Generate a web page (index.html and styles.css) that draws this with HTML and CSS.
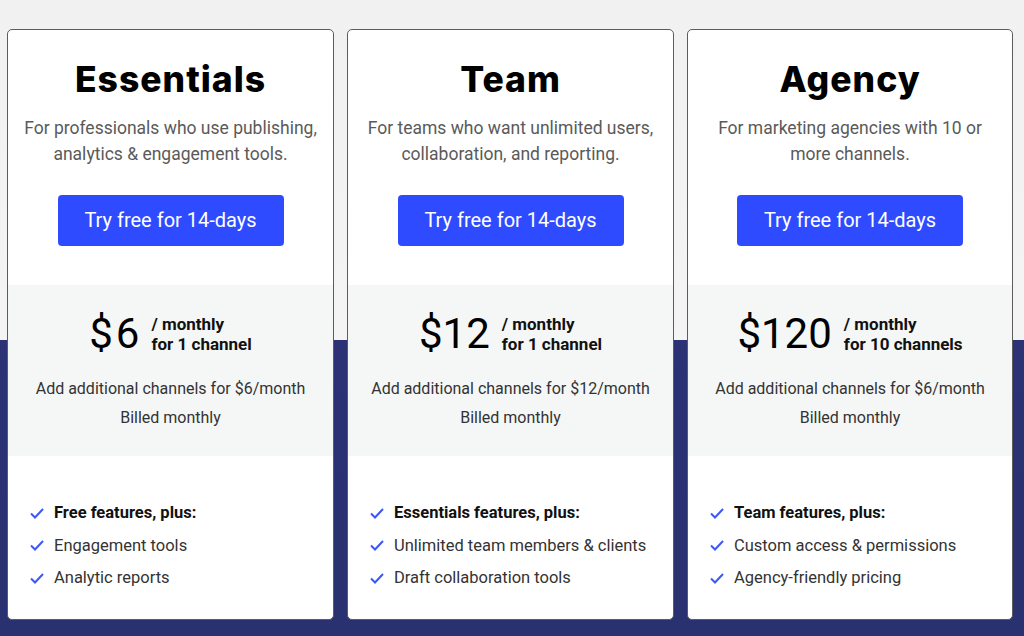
FILE: index.html
```html
<!DOCTYPE html>
<html lang="en">
<head>
<meta charset="utf-8">
<title>Pricing</title>
<link rel="stylesheet" href="styles.css">
</head>
<body>
<div class="page">
  <div class="plans">
    <div class="card">
      <div class="head">
        <h2 class="title">Essentials</h2>
        <p class="desc">For professionals who use publishing, analytics &amp; engagement tools.</p>
        <a class="btn">Try free for 14-days</a>
      </div>
      <div class="price">
        <div class="price-row">
          <span class="amount spaced">$6</span>
          <span class="per">/ monthly<br>for 1 channel</span>
        </div>
        <p class="note">Add additional channels for $6/month</p>
        <p class="note">Billed monthly</p>
      </div>
      <ul class="features">
        <li class="strong"><svg class="chk" viewBox="0 0 14 11"><path d="M1 5.5 L5 9.5 L13 1"/></svg>Free features, plus:</li>
        <li><svg class="chk" viewBox="0 0 14 11"><path d="M1 5.5 L5 9.5 L13 1"/></svg>Engagement tools</li>
        <li><svg class="chk" viewBox="0 0 14 11"><path d="M1 5.5 L5 9.5 L13 1"/></svg>Analytic reports</li>
      </ul>
    </div>
    <div class="card">
      <div class="head">
        <h2 class="title">Team</h2>
        <p class="desc">For teams who want unlimited users, collaboration, and reporting.</p>
        <a class="btn">Try free for 14-days</a>
      </div>
      <div class="price">
        <div class="price-row">
          <span class="amount">$12</span>
          <span class="per">/ monthly<br>for 1 channel</span>
        </div>
        <p class="note">Add additional channels for $12/month</p>
        <p class="note">Billed monthly</p>
      </div>
      <ul class="features">
        <li class="strong"><svg class="chk" viewBox="0 0 14 11"><path d="M1 5.5 L5 9.5 L13 1"/></svg>Essentials features, plus:</li>
        <li><svg class="chk" viewBox="0 0 14 11"><path d="M1 5.5 L5 9.5 L13 1"/></svg>Unlimited team members &amp; clients</li>
        <li><svg class="chk" viewBox="0 0 14 11"><path d="M1 5.5 L5 9.5 L13 1"/></svg>Draft collaboration tools</li>
      </ul>
    </div>
    <div class="card">
      <div class="head">
        <h2 class="title">Agency</h2>
        <p class="desc">For marketing agencies with 10 or more channels.</p>
        <a class="btn">Try free for 14-days</a>
      </div>
      <div class="price">
        <div class="price-row">
          <span class="amount">$120</span>
          <span class="per">/ monthly<br>for 10 channels</span>
        </div>
        <p class="note">Add additional channels for $6/month</p>
        <p class="note">Billed monthly</p>
      </div>
      <ul class="features">
        <li class="strong"><svg class="chk" viewBox="0 0 14 11"><path d="M1 5.5 L5 9.5 L13 1"/></svg>Team features, plus:</li>
        <li><svg class="chk" viewBox="0 0 14 11"><path d="M1 5.5 L5 9.5 L13 1"/></svg>Custom access &amp; permissions</li>
        <li><svg class="chk" viewBox="0 0 14 11"><path d="M1 5.5 L5 9.5 L13 1"/></svg>Agency-friendly pricing</li>
      </ul>
    </div>
  </div>
</div>
</body>
</html>
```

FILE: styles.css
```css
* { box-sizing: border-box; }
html, body { margin: 0; padding: 0; }
body {
  width: 1024px;
  height: 636px;
  overflow: hidden;
  font-family: Roboto, "Liberation Sans", sans-serif;
}
.page {
  height: 636px;
  background:
    linear-gradient(to bottom, #f1f1f1 0, #f4f4f4 340px, #2b3275 340px, #2a3170 636px);
  padding: 29px 0 0 7px;
}
.plans {
  display: grid;
  grid-template-columns: 327px 327px 326px;
  column-gap: 13px;
}
.card {
  height: 591px;
  background: #fff;
  border: 1px solid #5c5c5c;
  border-radius: 5px;
  overflow: hidden;
  display: flex;
  flex-direction: column;
}
.head {
  display: flex;
  flex-direction: column;
  align-items: center;
  text-align: center;
  padding: 28px 15px 39px;
}
.title {
  margin: 0;
  font-family: Inter, "DejaVu Sans", sans-serif;
  font-weight: 800;
  font-size: 35.5px;
  line-height: 44px;
  color: #000;
  letter-spacing: 1px;
}
.desc {
  margin: 13px 0 0;
  font-size: 17.5px;
  line-height: 26px;
  color: #5a5a5a;
}
.btn {
  margin-top: 28px;
  width: 226px;
  height: 51px;
  border-radius: 4px;
  background: #2f4bff;
  color: #fff;
  font-size: 20px;
  line-height: 51px;
  text-align: center;
}
.price {
  background: #f5f7f7;
  height: 171px;
  padding-top: 25px;
  text-align: center;
}
.price-row {
  display: flex;
  justify-content: center;
  align-items: center;
  gap: 12px;
}
.amount {
  font-size: 42px;
  line-height: 48px;
  color: #000;
  font-weight: 400;
}
.amount.spaced { letter-spacing: 3px; margin-right: -3px; }
.per {
  text-align: left;
  font-size: 17px;
  font-weight: 700;
  line-height: 20px;
  color: #111;
}
.note {
  margin: 0;
  font-size: 16px;
  line-height: 29px;
  color: #333;
}
.price-row + .note { margin-top: 16px; }
.features {
  list-style: none;
  margin: 41px 0 0;
  padding: 0 0 0 22px;
}
.features li {
  display: flex;
  align-items: center;
  font-size: 16.5px;
  line-height: 32.5px;
  color: #333;
}
.features li.strong { font-weight: 700; color: #111; }
.chk {
  width: 14px;
  height: 11px;
  margin-right: 10px;
  fill: none;
  stroke: #3b56ff;
  stroke-width: 2;
}
```
